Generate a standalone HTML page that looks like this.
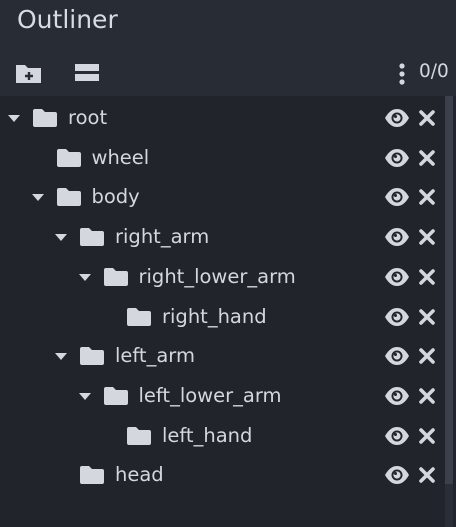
<!DOCTYPE html><html><head><style>
body{margin:0;width:456px;height:527px;background:#21242b;font-family:"DejaVu Sans","Liberation Sans",sans-serif;overflow:hidden;position:relative;color:#d4d7de}
.top{position:absolute;left:0;top:0;width:456px;height:96px;background:#282c34}
.title{position:absolute;left:17px;top:5px;font-size:25px;color:#d8dbe2}
.row{position:absolute;left:0;height:40px;width:440px;font-size:19.5px}
.row span{position:absolute;top:8px}
.tri{position:absolute;top:17px;width:0;height:0;border-left:6px solid transparent;border-right:6px solid transparent;border-top:7px solid #d4d7de}
.fold{position:absolute;top:10px}
.eye{position:absolute;left:384px;top:10px}
.x{position:absolute;left:418px;top:11px}
.sb{position:absolute;left:445px;top:96px;width:8px;height:388px;background:#3b404c}
.tr{position:absolute;left:445px;top:484px;width:8px;height:43px;background:#2a2e36}
</style></head><body>
<div class="top"></div>
<div class="title">Outliner</div>
<svg style="position:absolute;left:15px;top:62px" width="28" height="24" viewBox="0 0 28 24"><path d="M1 3h9l3 3h13v15H1z" fill="#d4d7de"/><path d="M14 10v8M10 14h8" stroke="#282c34" stroke-width="2.4"/></svg>
<div style="position:absolute;left:75px;top:64px;width:24px;height:7px;background:#d4d7de"></div>
<div style="position:absolute;left:75px;top:74px;width:24px;height:7px;background:#d4d7de"></div>
<svg style="position:absolute;left:397px;top:63px" width="10" height="22"><circle cx="5" cy="3" r="2.6" fill="#d4d7de"/><circle cx="5" cy="11" r="2.6" fill="#d4d7de"/><circle cx="5" cy="19" r="2.6" fill="#d4d7de"/></svg>
<div style="position:absolute;left:419px;top:61px;font-size:18.5px;color:#d4d7de">0/0</div>
<div class="sb"></div><div class="tr"></div>
<div id="rows"></div>
<script>
const d=[["root",0,1],["wheel",1,0],["body",1,1],["right_arm",2,1],["right_lower_arm",3,1],["right_hand",4,0],["left_arm",2,1],["left_lower_arm",3,1],["left_hand",4,0],["head",2,0]];
let h="";
d.forEach((r,i)=>{const y=98+i*39.7,o=r[1]*23.5;
h+=`<div class="row" style="top:${y}px">${r[2]?`<div class="tri" style="left:${8+o}px"></div>`:""}
<svg class="fold" style="left:${33+o}px" width="24" height="20" viewBox="0 0 24 20"><path d="M0 3a2 2 0 0 1 2-2h7l3 3h10a2 2 0 0 1 2 2v11a2 2 0 0 1-2 2H2a2 2 0 0 1-2-2z" fill="#d4d7de"/></svg>
<span style="left:${68+o}px">${r[0]}</span>
<svg class="eye" width="26" height="20" viewBox="0 0 26 20"><path d="M1 10C5 3 9 1 13 1s8 2 12 9c-4 7-8 9-12 9S5 17 1 10z" fill="#d4d7de"/><circle cx="13" cy="10" r="5.5" fill="#21242b"/><circle cx="13" cy="10" r="3.6" fill="#d4d7de"/><circle cx="11.5" cy="8.5" r="1.5" fill="#21242b"/></svg>
<svg class="x" width="18" height="18" viewBox="0 0 18 18"><path d="M3 3l12 12M15 3L3 15" stroke="#d4d7de" stroke-width="3.6" stroke-linecap="round"/></svg></div>`});
document.getElementById("rows").innerHTML=h;
</script>
</body></html>
